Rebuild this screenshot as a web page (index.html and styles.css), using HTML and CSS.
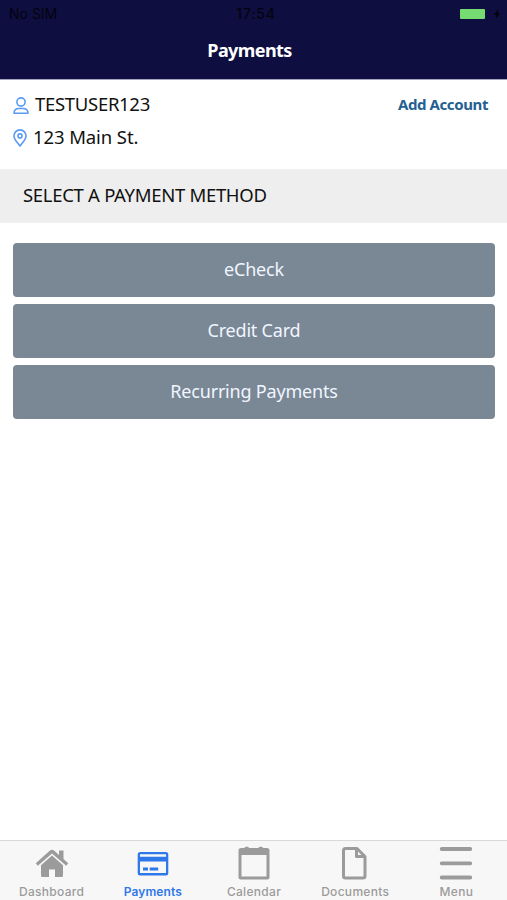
FILE: index.html
```html
<!DOCTYPE html>
<html lang="en">
<head>
    <meta charset="UTF-8">
    <meta name="viewport" content="width=device-width, initial-scale=1.0">
    <title>Payments</title>
    <link rel="stylesheet" href="styles.css">
</head>
<body>
    <header class="header">
        <div class="status-bar">
            <span class="carrier">No SIM</span>
            <span class="time">17:54</span>
            <span class="power">
                <span class="battery"></span>
                <svg width="8" height="10" viewBox="0 0 8 10"><path d="M5.500 0L.8 6h2.500L2.500 10l4.700-6H4.700z" fill="#03030f"/></svg>
            </span>
        </div>
        <h1>Payments</h1>
    </header>

    <main>
        <section class="account">
            <div class="account-row">
                <svg class="icon-user" width="16" height="18" viewBox="0 0 16 18" fill="none" stroke="#5a9bf5" stroke-width="1.6">
                    <circle cx="8" cy="5" r="4.1"/>
                    <path d="M1 16.3c0-3.2 2.2-4.8 4.8-4.8h4.4c2.6 0 4.8 1.6 4.8 4.8z" stroke-linejoin="round"/>
                </svg>
                <span class="username">TESTUSER123</span>
                <a class="add-account">Add Account</a>
            </div>
            <div class="account-row">
                <svg class="icon-pin" width="14" height="18" viewBox="0 0 14 18" fill="none" stroke="#5a9bf5" stroke-width="1.6">
                    <path d="M7 17C4.5 13.6 1 10.5 1 6.9a6 6 0 0 1 12 0C13 10.5 9.5 13.6 7 17z" stroke-linejoin="round"/>
                    <circle cx="7" cy="6.9" r="2"/>
                </svg>
                <span class="address">123 Main St.</span>
            </div>
        </section>

        <h2>SELECT A PAYMENT METHOD</h2>

        <div class="methods">
            <button class="echeck">eCheck</button>
            <button class="card">Credit Card</button>
            <button class="recurring">Recurring Payments</button>
        </div>
    </main>

    <nav class="tabs">
        <a class="tab">
            <svg width="34" height="34" viewBox="0 0 34 34" fill="#9b9b9b">
                <path d="M.8 17.2L14.7 4.700a3.400 3.400 0 0 1 4.600 0L24 9V4.600h4.500v8.500l4.700 4.100-2 2.500L17 7.500 2.800 19.700z"/>
                <path d="M17 9.600l11 9.700v10.200a1.500 1.500 0 0 1-1.500 1.500H20v-7.500h-6V31H7.500A1.500 1.500 0 0 1 6 29.500V19.300z"/>
            </svg>
            <span>Dashboard</span>
        </a>
        <a class="tab active">
            <svg width="34" height="34" viewBox="0 0 34 34" fill="#2f78ea">
                <path fill-rule="evenodd" d="M4.200 6h25.600A2.500 2.500 0 0 1 32.300 8.500v18.500a2.500 2.500 0 0 1-2.500 2.500H4.200A2.500 2.500 0 0 1 1.700 27V8.500A2.500 2.500 0 0 1 4.200 6zM4 8.200v2.500h26V8.200zM4 15.500v11.500h26V15.500z"/>
                <path d="M7 21.500h5v3H7zM13.700 21.500h8.500v3h-8.500z"/>
            </svg>
            <span>Payments</span>
        </a>
        <a class="tab">
            <svg width="34" height="34" viewBox="0 0 34 34" fill="#9b9b9b">
                <path fill-rule="evenodd" d="M4 2h3.500c0-1.600 4.500-1.600 4.500 0h9.500c0-1.600 4.500-1.600 4.500 0h4a2.500 2.500 0 0 1 2.500 2.500v26.500A2.500 2.500 0 0 1 30 33.500H4a2.500 2.500 0 0 1-2.500-2.500v-26.500A2.500 2.500 0 0 1 4 2zM4.500 9v21.500h25V9z"/>
            </svg>
            <span>Calendar</span>
        </a>
        <a class="tab">
            <svg width="34" height="34" viewBox="0 0 34 34" fill="none" stroke="#9b9b9b" stroke-width="3" stroke-linejoin="round">
                <path d="M7.500 2.500H19l8 8V30a2 2 0 0 1-2 2H7.500a2 2 0 0 1-2-2V4.500a2 2 0 0 1 2-2z"/>
                <path d="M18.500 3v7.500H27"/>
            </svg>
            <span>Documents</span>
        </a>
        <a class="tab">
            <svg width="34" height="34" viewBox="0 0 34 34" stroke="#9b9b9b" stroke-width="3.800" stroke-linecap="round">
                <path d="M2.700 3h28.600M2.700 17.300h28.600M2.700 31.500h28.600"/>
            </svg>
            <span>Menu</span>
        </a>
    </nav>
</body>
</html>
```
FILE: styles.css
```css
* {
    box-sizing: border-box;
}
body {
    margin: 0;
    height: 900px;
    display: flex;
    flex-direction: column;
    font-family: "Noto Sans", sans-serif;
    background-color: #fff;
    color: #111;
}
svg {
    display: block;
    flex-shrink: 0;
}
.header {
    height: 80px;
    background-color: #0f0e40;
    border-bottom: 1px solid #a3a3bd;
}
.status-bar {
    display: grid;
    grid-template-columns: 1fr auto 1fr;
    align-items: center;
    height: 27px;
    padding: 0 6px 0 9px;
    font-family: Inter, sans-serif;
    font-size: 14px;
    color: #03030f;
}
.time {
    padding-left: 2px;
    font-weight: 500;
    letter-spacing: 0.8px;
}
.power {
    display: flex;
    justify-content: flex-end;
    align-items: center;
    gap: 8px;
}
.battery {
    width: 25px;
    height: 10px;
    border-radius: 1px;
    background-color: #76dc72;
}
h1 {
    margin: 0;
    padding-right: 8px;
    text-align: center;
    font-size: 18px;
    line-height: 46px;
    letter-spacing: -0.6px;
    color: #fff;
}
.account {
    height: 89px;
    padding: 7px 19px 0 12px;
}
.account-row {
    display: flex;
    align-items: center;
    height: 33px;
    font-size: 18.5px;
    letter-spacing: -0.3px;
}
.icon-user {
    margin: 5px 6px 0 1px;
}
.icon-pin {
    margin: 3px 6px 0 1px;
}
.address {
    letter-spacing: -0.1px;
}
.add-account {
    margin-left: auto;
    padding-top: 1px;
    font-size: 15px;
    font-weight: bold;
    letter-spacing: -0.4px;
    color: #246091;
}
h2 {
    margin: 0;
    height: 54px;
    padding-left: 23px;
    background-color: #eee;
    font-size: 18.5px;
    font-weight: normal;
    line-height: 51px;
    letter-spacing: -0.3px;
}
.methods {
    display: flex;
    flex-direction: column;
    gap: 7px;
    padding: 20px 12px 0 13px;
}
.methods button {
    height: 54px;
    padding: 0 0 3px;
    border: 0;
    border-radius: 4px;
    background-color: #7a8795;
    color: #f0f6ff;
    font: inherit;
    font-size: 18px;
    letter-spacing: -0.2px;
}
.tabs {
    display: grid;
    grid-template-columns: repeat(5, 1fr);
    height: 60px;
    margin-top: auto;
    padding-left: 1px;
    border-top: 1px solid #d8d8d8;
    background-color: #f7f7f7;
}
.tab {
    display: flex;
    flex-direction: column;
    align-items: center;
    padding-top: 5px;
    gap: 4px;
    font-family: Inter, sans-serif;
    font-size: 12px;
    font-weight: 500;
    line-height: 16px;
    letter-spacing: 0.3px;
    color: #9b9b9b;
}
.active {
    font-weight: 600;
    letter-spacing: 0.1px;
    color: #2f78ea;
}
```
